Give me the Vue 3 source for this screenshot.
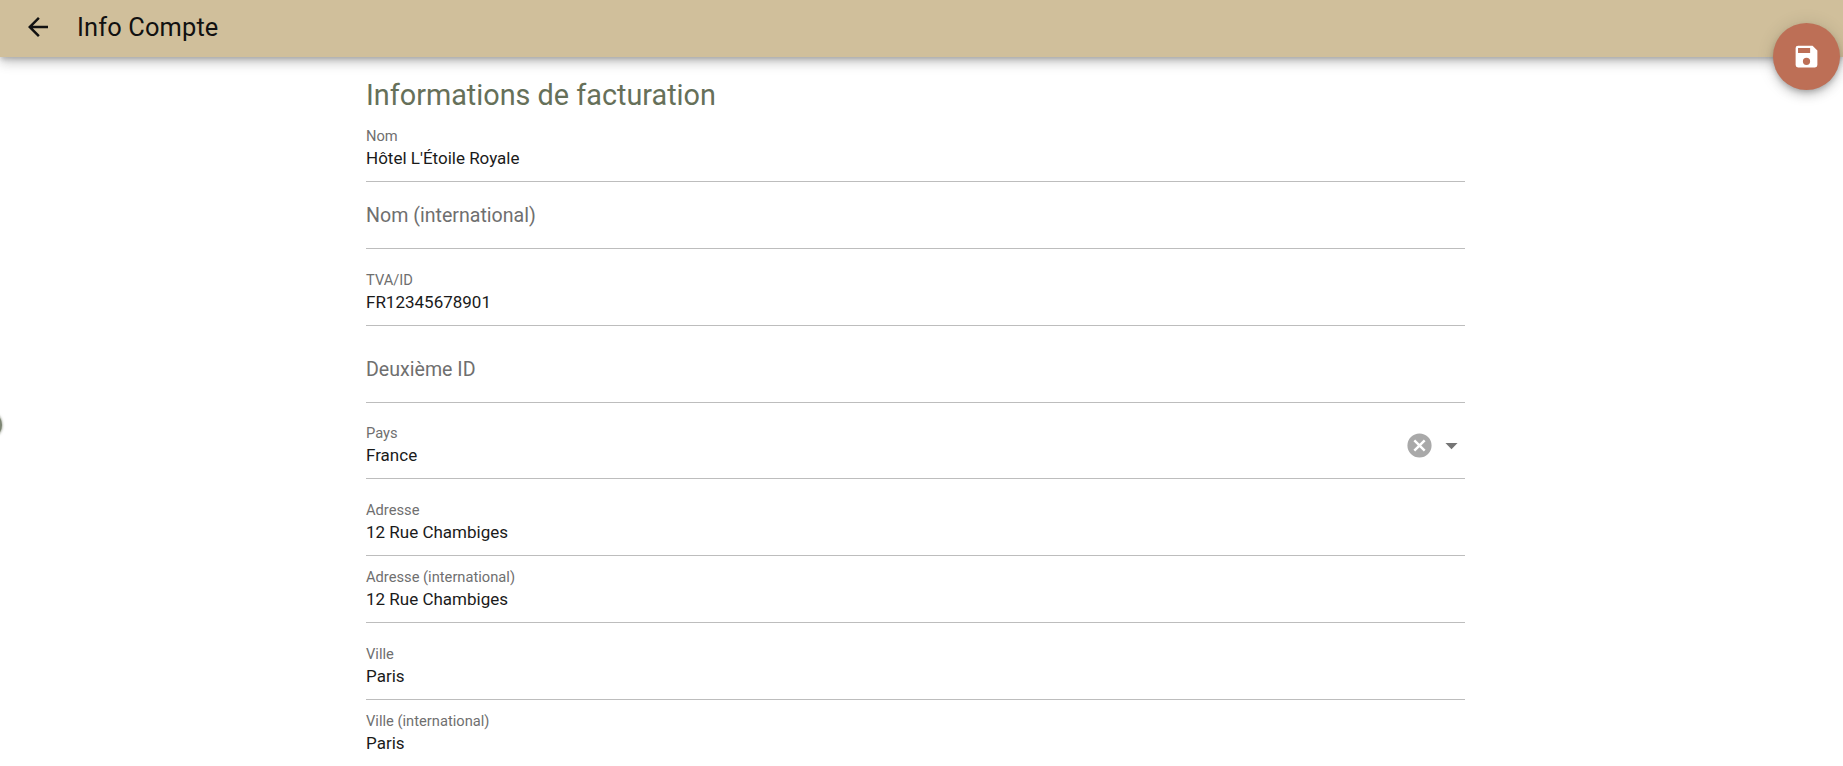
<script setup>
const fields = [
  { label: 'Nom', value: 'Hôtel L\'Étoile Royale', tight: true },
  { label: 'Nom (international)', value: '', tight: true },
  { label: 'TVA/ID', value: 'FR12345678901' },
  { label: 'Deuxième ID', value: '' },
  { label: 'Pays', value: 'France', select: true },
  { label: 'Adresse', value: '12 Rue Chambiges' },
  { label: 'Adresse (international)', value: '12 Rue Chambiges', tight: true },
  { label: 'Ville', value: 'Paris' },
  { label: 'Ville (international)', value: 'Paris', tight: true }
]
</script>

<template>
  <div class="page">
    <header class="toolbar">
      <button class="back" aria-label="Retour">
        <svg width="30" height="30" viewBox="0 0 24 24"><path d="M20 11H7.83l5.59-5.59L12 4l-8 8 8 8 1.41-1.41L7.83 13H20v-2z" fill="#111" /></svg>
      </button>
      <div class="title">Info Compte</div>
    </header>

    <button class="fab" aria-label="Enregistrer">
      <svg width="29" height="29" viewBox="0 0 24 24"><path d="M17 3H5a2 2 0 0 0-2 2v14a2 2 0 0 0 2 2h14a2 2 0 0 0 2-2V7l-4-4zm-5 16a3 3 0 1 1 0-6 3 3 0 0 1 0 6zm3-10H5V5h10v4z" fill="#fff" /></svg>
    </button>

    <div class="side-handle"></div>

    <main class="content">
      <h2>Informations de facturation</h2>
      <div v-for="f in fields" :key="f.label" class="field" :class="{ tight: f.tight, empty: !f.value, select: f.select }">
        <div class="text">
          <label>{{ f.label }}</label>
          <div v-if="f.value" class="value">{{ f.value }}</div>
        </div>
        <div v-if="f.select" class="actions">
          <svg width="29" height="29" viewBox="0 0 24 24"><path d="M12 2a10 10 0 1 0 0 20 10 10 0 0 0 0-20zm5 13.59L15.59 17 12 13.41 8.41 17 7 15.59 10.59 12 7 8.41 8.41 7 12 10.59 15.59 7 17 8.41 13.41 12 17 15.59z" fill="#a9a9a9" /></svg>
          <svg width="29" height="29" viewBox="0 0 24 24"><path d="M7 10l5 5 5-5z" fill="#757575" /></svg>
        </div>
      </div>
    </main>
  </div>
</template>

<style scoped>
.page {
  position: relative;
  height: 766px;
  overflow: hidden;
  background: #fff;
  font-family: Roboto, "Liberation Sans", sans-serif;
}
.toolbar {
  display: flex;
  align-items: center;
  height: 57px;
  padding-bottom: 3px;
  box-sizing: border-box;
  background: #d0bf9b;
  box-shadow: 0 3px 5px -1px rgba(0,0,0,.2), 0 6px 10px rgba(0,0,0,.14), 0 1px 18px rgba(0,0,0,.12);
}
.back {
  display: flex;
  margin-left: 23px;
  padding: 0;
  border: 0;
  background: none;
}
.title {
  margin-left: 24px;
  font-size: 25.4px;
  letter-spacing: .15px;
  color: #111;
}
.fab {
  position: absolute;
  top: 23px;
  right: 3px;
  display: flex;
  align-items: center;
  justify-content: center;
  width: 67px;
  height: 67px;
  padding: 0;
  border: 0;
  border-radius: 50%;
  background: #bd6f56;
  box-shadow: 0 3px 5px -1px rgba(0,0,0,.2), 0 6px 10px rgba(0,0,0,.14), 0 1px 18px rgba(0,0,0,.12);
}
.side-handle {
  position: absolute;
  left: -14px;
  top: 414px;
  width: 16px;
  height: 22px;
  border-radius: 50%;
  background: #7d8573;
  box-shadow: 0 0 2px 1px rgba(125,133,115,.5);
}
.content {
  width: 1099px;
  margin-left: 366px;
}
h2 {
  margin: 0 0 4px;
  padding-top: 22px;
  font-size: 28.8px;
  line-height: 32px;
  font-weight: 400;
  color: #667059;
}
.field {
  display: flex;
  align-items: flex-end;
  height: 67px;
  margin-top: 10px;
  box-sizing: border-box;
  border-bottom: 1px solid #bdbdbd;
}
.field.tight {
  margin-top: 0;
}
.field.select {
  margin-top: 9px;
}
.text {
  flex: 1;
  padding-bottom: 11px;
}
label {
  display: block;
  font-size: 14.7px;
  line-height: 18px;
  color: #6f6f6f;
}
.value {
  margin-top: 1px;
  font-size: 17px;
  line-height: 24px;
  color: #1a1a1a;
}
.empty .text {
  padding-bottom: 20px;
}
.empty label {
  font-size: 19.6px;
  line-height: 24px;
}
.actions {
  display: flex;
  align-items: center;
  gap: 3px;
  margin-right: -1px;
  padding-bottom: 18px;
}
</style>

<style>
html, body {
  margin: 0;
  overflow: hidden;
}
</style>
